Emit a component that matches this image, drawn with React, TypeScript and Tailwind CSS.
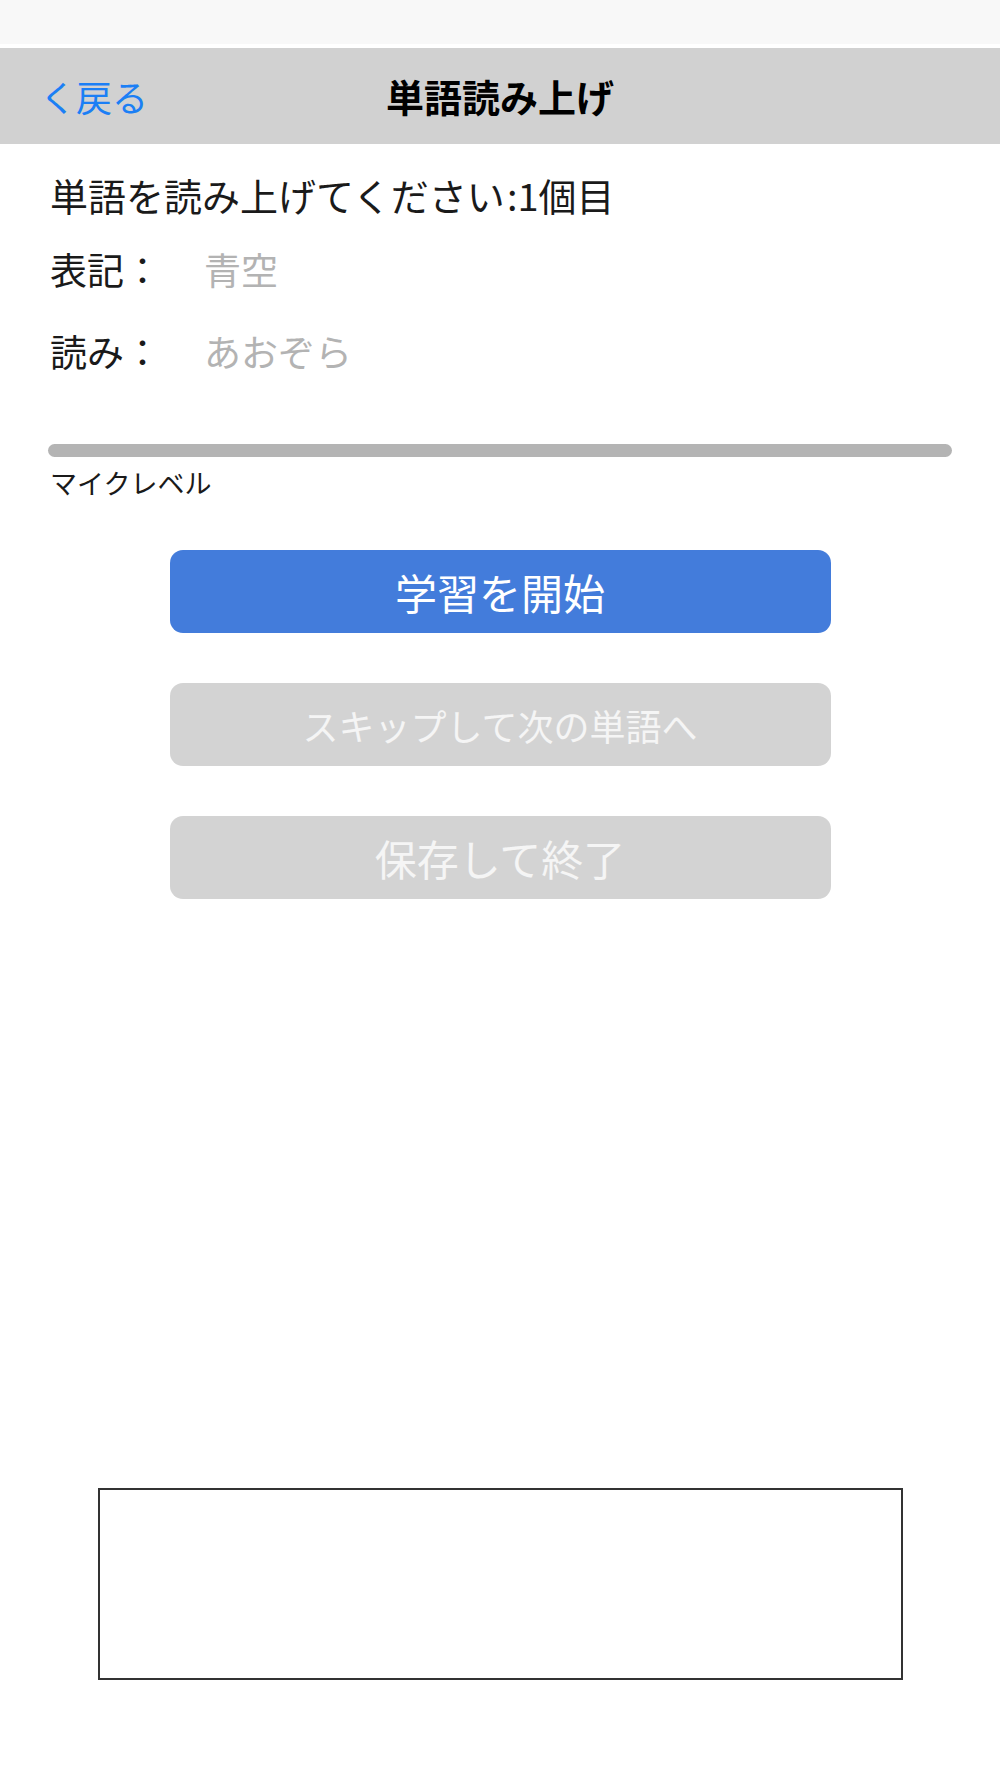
export default function App() {
  const font = "font-['Noto_Sans_CJK_JP','Noto_Sans',sans-serif]"

  return (
    <div className={`w-[1000px] min-h-[1778px] bg-white flex flex-col ${font}`}>
      {/* status area */}
      <div className="h-[44px] bg-[#f8f8f8]" />
      <div className="h-[4px] bg-white" />

      {/* nav bar */}
      <header className="h-[96px] bg-[#d1d1d1] grid grid-cols-[1fr_auto_1fr] items-center">
        <button className="justify-self-start pl-[40px] text-[36px] leading-none text-[#1b7ff5]">
          く戻る
        </button>
        <h1 className="text-[38px] leading-none font-bold text-black">単語読み上げ</h1>
        <div />
      </header>

      {/* word info */}
      <div className="px-[50px] text-[37px] text-[#1a1a1a]">
        <div className="mt-[14px] h-[74px] flex items-center text-[38px] leading-none">
          単語を読み上げてください<span className="ml-[2px]">:1</span>個目
        </div>
        <div className="h-[74px] flex items-center leading-none">
          <span className="w-[154px]">表記：</span>
          <span className="text-[#b3b3b3]">青空</span>
        </div>
        <div className="mt-[8px] h-[74px] flex items-center leading-none">
          <span className="w-[154px]">読み：</span>
          <span className="text-[#b3b3b3]">あおぞら</span>
        </div>
      </div>

      {/* mic level */}
      <div className="mt-[56px] px-[48px]">
        <div className="h-[13px] rounded-full bg-[#b4b4b4]" />
      </div>
      <div className="px-[50px] h-[51px] flex items-center text-[27px] leading-none text-[#1a1a1a]">
        マイクレベル
      </div>

      {/* actions */}
      <div className="mt-[42px] flex flex-col items-center gap-[50px]">
        <button className="w-[661px] h-[83px] rounded-[13px] bg-[#437cdb] text-white text-[42px] leading-none">
          学習を開始
        </button>
        <button className="w-[661px] h-[83px] rounded-[13px] bg-[#d3d3d3] text-[#f5f5f5] text-[36px] leading-none">
          スキップして次の単語へ
        </button>
        <button className="w-[661px] h-[83px] rounded-[13px] bg-[#d3d3d3] text-[#f5f5f5] text-[42px] leading-none">
          保存して終了
        </button>
      </div>

      {/* bottom panel */}
      <div className="mt-[589px] mx-auto w-[805px] h-[192px] border-2 border-[#333333] bg-white" />
    </div>
  )
}
